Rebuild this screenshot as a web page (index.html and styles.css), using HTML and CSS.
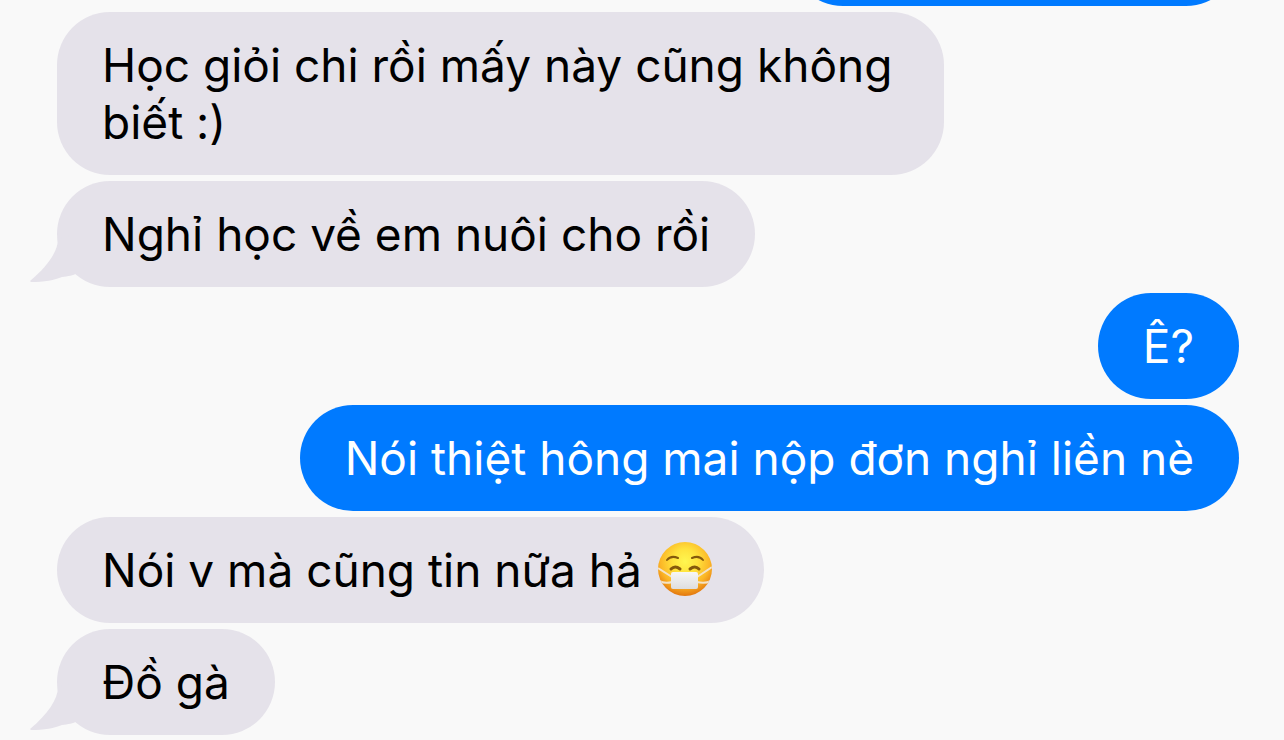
FILE: index.html
```html
<!DOCTYPE html>
<html lang="vi">
<head>
    <meta charset="UTF-8">
    <meta name="viewport" content="width=device-width, initial-scale=1.0">
    <title>Tin nhắn</title>
    <link rel="stylesheet" href="styles.css">
</head>
<body>
    <main class="chat">
        <div class="bubble sent previous"></div>
        <div class="bubble received">Học giỏi chi rồi mấy này cũng không biết :)</div>
        <div class="bubble received">
            <svg class="tail" viewBox="0 0 60 50" aria-hidden="true">
                <path d="M28 4 C28 16 18 31 0 46 L1 47 C14 47 25 45 32 42 C38 41 43 41 47 38 L60 26 L42 0 Z"/>
            </svg>
            Nghỉ học về em nuôi cho rồi
        </div>
        <div class="bubble sent">Ê?</div>
        <div class="bubble sent">Nói thiệt hông mai nộp đơn nghỉ liền nè</div>
        <div class="bubble received">
            Nói v mà cũng tin nữa hả
            <svg class="emoji" viewBox="0 0 56 56" role="img" aria-label="Mặt đeo khẩu trang">
                <defs>
                    <radialGradient id="face" cx="50%" cy="36%" r="66%">
                        <stop offset="0" stop-color="#fff650"/>
                        <stop offset="0.35" stop-color="#ffe23c"/>
                        <stop offset="0.7" stop-color="#fbb526"/>
                        <stop offset="1" stop-color="#e0700c"/>
                    </radialGradient>
                    <linearGradient id="mask" x1="0" y1="0" x2="0" y2="1">
                        <stop offset="0" stop-color="#f6f6f6"/>
                        <stop offset="1" stop-color="#dedede"/>
                    </linearGradient>
                    <clipPath id="round"><circle cx="28" cy="28" r="27"/></clipPath>
                </defs>
                <circle cx="28" cy="28" r="27" fill="url(#face)"/>
                <g fill="none" stroke="#85590b" stroke-linecap="round">
                    <path d="M10 19 Q14 14 21 17" stroke-width="2"/>
                    <path d="M35 17 Q42 14 46 19" stroke-width="2"/>
                    <path d="M14 28 Q18 24 23 28" stroke-width="3"/>
                    <path d="M33 28 Q38 24 42 28" stroke-width="3"/>
                </g>
                <g clip-path="url(#round)" fill="none" stroke="#f3e3c8" stroke-width="2">
                    <path d="M1 27 L15 36 M55 26 L40 36 M2 40 Q8 43 15 41 M54 40 Q48 43 40 41"/>
                </g>
                <rect x="14" y="31" width="27" height="17" rx="2" fill="url(#mask)"/>
            </svg>
        </div>
        <div class="bubble received">
            <svg class="tail" viewBox="0 0 60 50" aria-hidden="true">
                <path d="M28 4 C28 16 18 31 0 46 L1 47 C14 47 25 45 32 42 C38 41 43 41 47 38 L60 26 L42 0 Z"/>
            </svg>
            Đồ gà
        </div>
    </main>
</body>
</html>
```

FILE: styles.css
```css
* {
    box-sizing: border-box;
}
body {
    margin: 0;
    background-color: #f9f9f9;
    font-family: Inter, Roboto, sans-serif;
    font-size: 46px;
    line-height: 57px;
    color: #000;
    overflow: hidden;
}
.chat {
    display: flex;
    flex-direction: column;
    align-items: flex-start;
    gap: 6px;
    padding: 0 45px 0 57px;
}
.bubble {
    position: relative;
    max-width: 75%;
    min-height: 106px;
    padding: 25px 45px 24px;
    border-radius: 53px;
}
.received {
    background-color: #e5e2ea;
}
.sent {
    align-self: flex-end;
    max-width: 85%;
    background-color: #007aff;
    color: #fff;
}
/* older message, scrolled almost out of view */
.previous {
    width: 38%;
    margin-top: -100px;
}
.tail {
    position: absolute;
    left: -27px;
    bottom: 2px;
    width: 60px;
    height: 50px;
    fill: #e5e2ea;
}
.emoji {
    display: inline-block;
    width: 56px;
    height: 56px;
    margin: -4px 6px -4px 2px;
    vertical-align: -6px;
}
```
